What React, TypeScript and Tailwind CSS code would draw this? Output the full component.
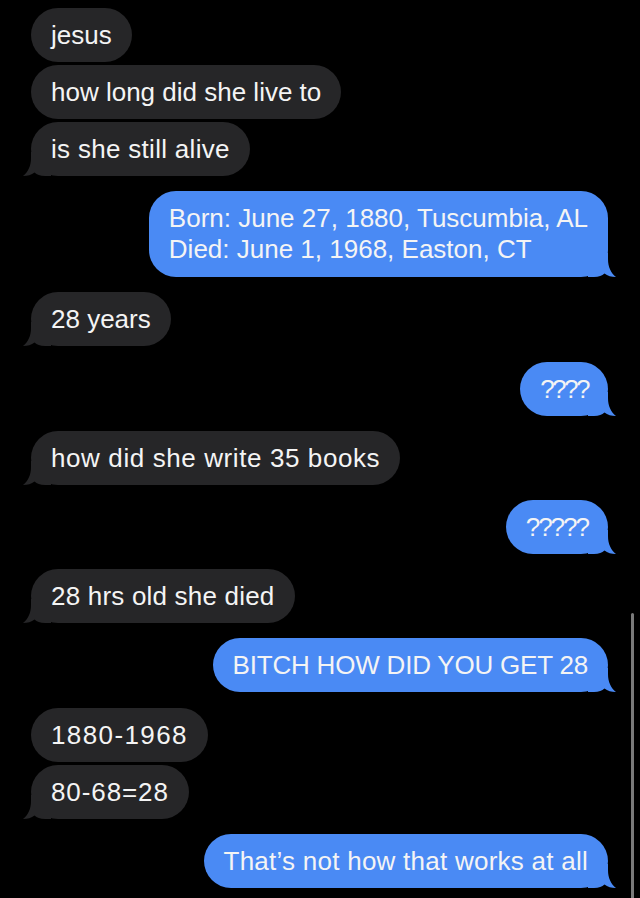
import React from "react";

type Msg = { text: string[]; me: boolean; tail: boolean; gap: string; track?: string };

const messages: Msg[] = [
  { text: ["jesus"], me: false, tail: false, gap: "mt-[3px]" },
  { text: ["how long did she live to"], me: false, tail: false, gap: "mt-[3px]" },
  { text: ["is she still alive"], me: false, tail: true, gap: "mt-[3px]", track: "tracking-[0.3px]" },
  {
    text: ["Born: June 27, 1880, Tuscumbia, AL", "Died: June 1, 1968, Easton, CT"],
    me: true,
    tail: true,
    gap: "mt-[15px]",
  },
  { text: ["28 years"], me: false, tail: true, gap: "mt-[15px]" },
  { text: ["????"], me: true, tail: true, gap: "mt-[16px]", track: "tracking-[-2.5px]" },
  { text: ["how did she write 35 books"], me: false, tail: true, gap: "mt-[15px]", track: "tracking-[0.6px]" },
  { text: ["?????"], me: true, tail: true, gap: "mt-[15px]", track: "tracking-[-2px]" },
  { text: ["28 hrs old she died"], me: false, tail: true, gap: "mt-[15px]", track: "tracking-[0.2px]" },
  { text: ["BITCH HOW DID YOU GET 28"], me: true, tail: true, gap: "mt-[15px]", track: "tracking-[-0.2px]" },
  { text: ["1880-1968"], me: false, tail: false, gap: "mt-[16px]", track: "tracking-[1.4px]" },
  { text: ["80-68=28"], me: false, tail: true, gap: "mt-[3px]", track: "tracking-[0.9px]" },
  {
    text: ["That\u2019s not how that works at all"],
    me: true,
    tail: true,
    gap: "mt-[15px]",
    track: "tracking-[0.25px]",
  },
];

function Tail({ me }: { me: boolean }) {
  return (
    <svg
      width="28"
      height="24"
      viewBox="0 0 28 24"
      className={
        me
          ? "absolute -right-[8px] bottom-0 -scale-x-100"
          : "absolute -left-[8px] bottom-0"
      }
    >
      <path
        d="M8 0 L28 0 L28 24 L22 24 C17 24 14 22.5 11.5 20.5 C8.5 23 4.5 24 0 24 C5 20 8 14 8 6 Z"
        fill={me ? "#4a8af4" : "#262628"}
      />
    </svg>
  );
}

function Bubble({ m }: { m: Msg }) {
  return (
    <div
      className={`flex ${m.me ? "justify-end pr-[32px]" : "justify-start pl-[31px]"} ${m.gap}`}
    >
      <div
        className={`relative rounded-[27px] px-[20px] py-[12px] text-[26px] text-[#f4f4f4] ${
          m.text.length > 1 ? "leading-[31px]" : "leading-[30px]"
        } ${m.me ? "bg-[#4a8af4]" : "bg-[#262628]"} ${m.track ?? ""}`}
      >
        {m.tail && <Tail me={m.me} />}
        <div className="relative">
          {m.text.map((t) => (
            <div key={t} className="whitespace-nowrap">
              {t}
            </div>
          ))}
        </div>
      </div>
    </div>
  );
}

export default function App() {
  return (
    <div
      className="relative h-[898px] w-full overflow-hidden bg-black pt-[5px]"
      style={{ fontFamily: '"Liberation Sans", Arial, sans-serif' }}
    >
      {messages.map((m, i) => (
        <Bubble key={i} m={m} />
      ))}
      <div className="absolute right-[6px] top-[613px] h-[290px] w-[3px] rounded-full bg-[#7a7a7a]" />
    </div>
  );
}
